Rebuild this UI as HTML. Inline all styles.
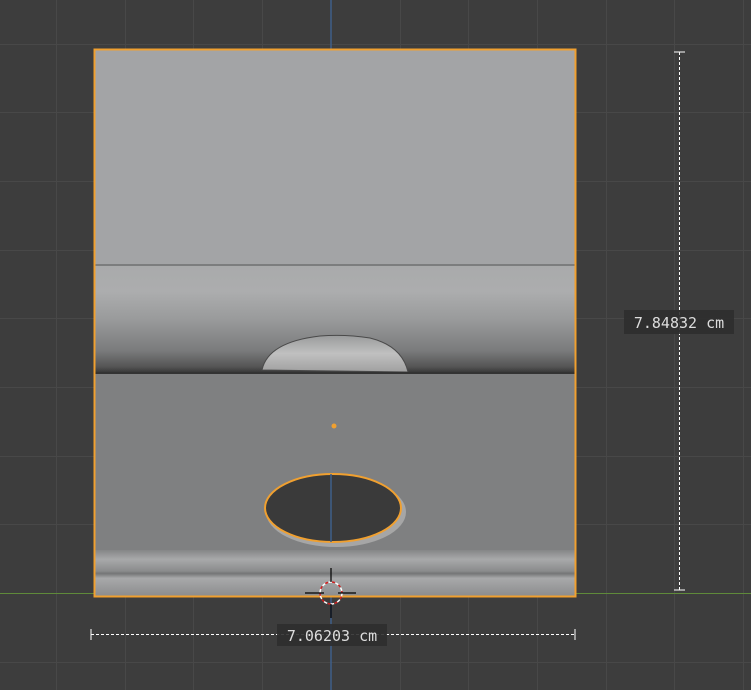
<!DOCTYPE html>
<html><head><style>html,body{margin:0;padding:0;background:#3d3d3d;overflow:hidden}</style></head>
<body>
<svg width="751" height="690" viewBox="0 0 751 690" xmlns="http://www.w3.org/2000/svg" style="display:block">
<defs>
<linearGradient id="cyl" x1="0" y1="0" x2="0" y2="1">
<stop offset="0" stop-color="#a9aaab"/><stop offset="0.25" stop-color="#acadae"/>
<stop offset="0.5" stop-color="#9a9b9c"/><stop offset="0.8" stop-color="#7a7b7c"/>
<stop offset="0.95" stop-color="#555"/><stop offset="1" stop-color="#3a3a3a"/>
</linearGradient>
<linearGradient id="bump" x1="0" y1="0" x2="0" y2="1">
<stop offset="0" stop-color="#9a9b9c"/><stop offset="0.5" stop-color="#c0c0c0"/><stop offset="1" stop-color="#a0a0a0"/>
</linearGradient>
<linearGradient id="rail" x1="0" y1="0" x2="0" y2="1">
<stop offset="0" stop-color="#858687"/><stop offset="0.2" stop-color="#a8a9aa"/><stop offset="0.45" stop-color="#8a8b8c"/>
<stop offset="0.5" stop-color="#747576"/><stop offset="0.6" stop-color="#a8a9aa"/><stop offset="1" stop-color="#8a8b8c"/>
</linearGradient>
</defs>
<rect width="751" height="690" fill="#3d3d3d"/>
<g stroke="#484848" stroke-width="1">
<line x1="56.5" y1="0" x2="56.5" y2="690"/><line x1="125.5" y1="0" x2="125.5" y2="690"/>
<line x1="193.5" y1="0" x2="193.5" y2="690"/><line x1="262.5" y1="0" x2="262.5" y2="690"/>
<line x1="400.5" y1="0" x2="400.5" y2="690"/><line x1="468.5" y1="0" x2="468.5" y2="690"/>
<line x1="537.5" y1="0" x2="537.5" y2="690"/><line x1="606.5" y1="0" x2="606.5" y2="690"/>
<line x1="674.5" y1="0" x2="674.5" y2="690"/><line x1="743.5" y1="0" x2="743.5" y2="690"/>
<line x1="0" y1="44.5" x2="751" y2="44.5"/><line x1="0" y1="112.5" x2="751" y2="112.5"/>
<line x1="0" y1="181.5" x2="751" y2="181.5"/><line x1="0" y1="250.5" x2="751" y2="250.5"/>
<line x1="0" y1="318.5" x2="751" y2="318.5"/><line x1="0" y1="387.5" x2="751" y2="387.5"/>
<line x1="0" y1="456.5" x2="751" y2="456.5"/><line x1="0" y1="524.5" x2="751" y2="524.5"/>
<line x1="0" y1="662.5" x2="751" y2="662.5"/>
</g>
<line x1="0" y1="593.5" x2="751" y2="593.5" stroke="#5f8a3a"/>
<line x1="331" y1="0" x2="331" y2="690" stroke="#3e5f8a" stroke-width="1.5"/>
<rect x="94" y="50" width="481" height="215" fill="#a3a4a6"/>
<rect x="94" y="265" width="481" height="107" fill="url(#cyl)"/>
<line x1="94" y1="265" x2="575" y2="265" stroke="#7c7d7e" stroke-width="2"/>
<path d="M262 370 Q268 342 320 336 Q345 334 370 338 Q402 346 408 372 Z" fill="url(#bump)" stroke="#4a4a4a" stroke-width="1"/>
<rect x="94" y="372" width="481" height="180" fill="#7f8081"/>
<line x1="94" y1="373" x2="575" y2="373" stroke="#333" stroke-width="2"/>
<rect x="94" y="550" width="481" height="47" fill="url(#rail)"/>
<ellipse cx="336" cy="512" rx="70" ry="35" fill="#c0c0c0" opacity="0.6"/>
<ellipse cx="333" cy="508" rx="68" ry="34" fill="#3a3a3a" stroke="#f0a030" stroke-width="2"/>
<line x1="331" y1="474" x2="331" y2="542" stroke="#3e5f8a" stroke-width="1.5"/>
<rect x="94.5" y="49.5" width="481" height="547" fill="none" stroke="#f0a030" stroke-width="2"/>
<circle cx="334" cy="426" r="2.5" fill="#f0a030"/>
<circle cx="331" cy="593" r="11" fill="none" stroke="#fff" stroke-width="1.5" stroke-dasharray="4 3"/>
<circle cx="331" cy="593" r="11" fill="none" stroke="#d02020" stroke-width="1.5" stroke-dasharray="3 4" stroke-dashoffset="3.5"/>
<g stroke="#000" stroke-width="1.2"><line x1="331" y1="568" x2="331" y2="582"/><line x1="331" y1="604" x2="331" y2="618"/>
<line x1="305" y1="593" x2="324" y2="593"/><line x1="338" y1="593" x2="356" y2="593"/></g>
<line x1="679.5" y1="52" x2="679.5" y2="591" stroke="#fff" stroke-dasharray="3 2"/>
<line x1="674" y1="52" x2="685" y2="52" stroke="#fff"/><line x1="674" y1="590" x2="685" y2="590" stroke="#fff"/>
<line x1="91" y1="634.5" x2="575" y2="634.5" stroke="#fff" stroke-dasharray="3 2"/>
<line x1="91" y1="629" x2="91" y2="640" stroke="#fff"/><line x1="575" y1="629" x2="575" y2="640" stroke="#fff"/>
<rect x="624" y="310" width="110" height="24" fill="#2e2e2e" opacity="0.9"/>
<text x="679" y="328" font-family="DejaVu Sans Mono, monospace" font-size="15" fill="#ddd" text-anchor="middle">7.84832 cm</text>
<rect x="277" y="624" width="110" height="22" fill="#2e2e2e" opacity="0.9"/>
<text x="332" y="641" font-family="DejaVu Sans Mono, monospace" font-size="15" fill="#ddd" text-anchor="middle">7.06203 cm</text>
</svg>
</body></html>
